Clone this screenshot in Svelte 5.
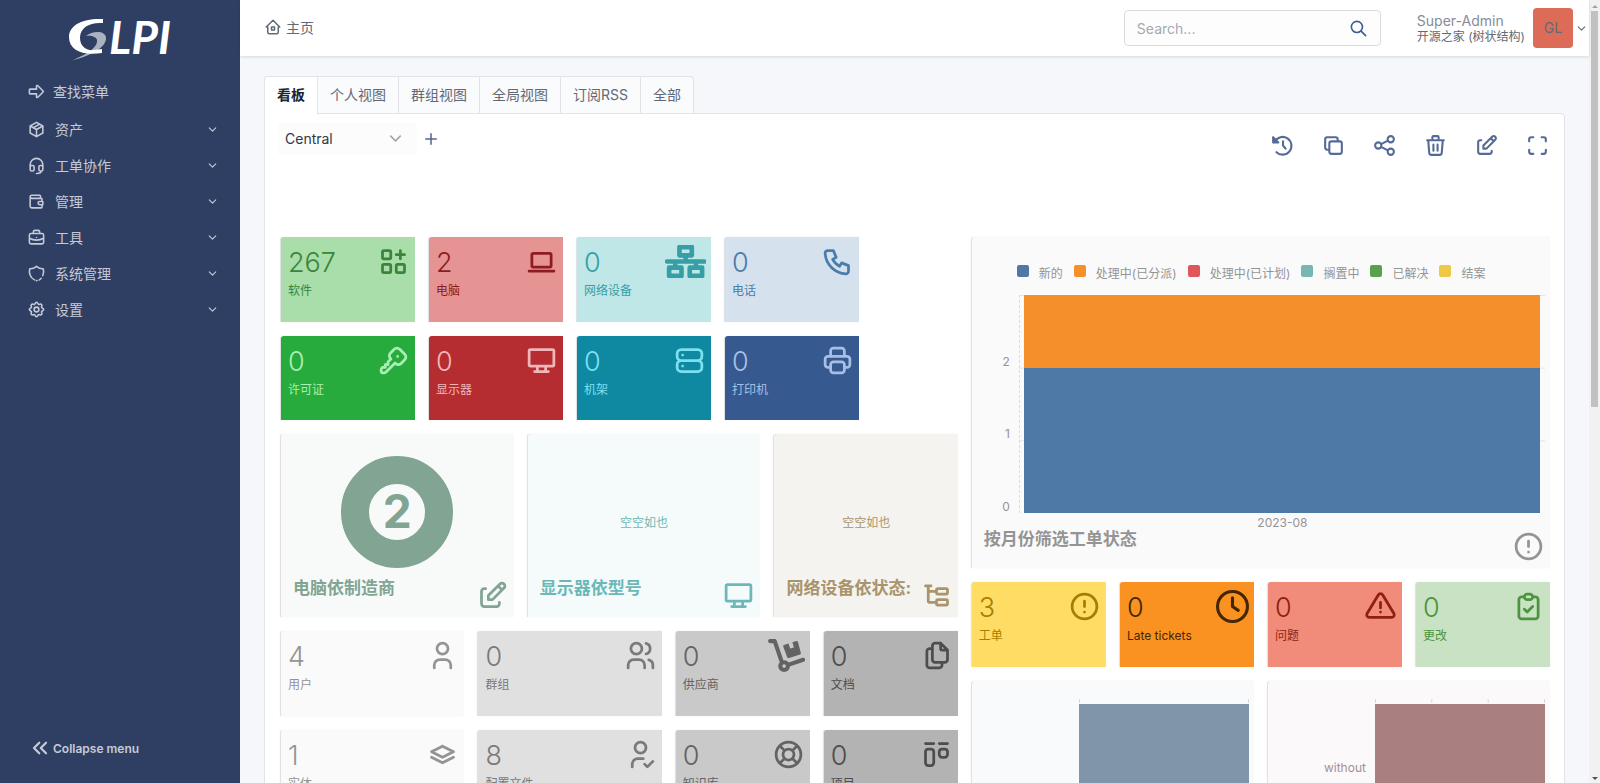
<script>
	const icons = {
		arrow: 'M4 9h8v-3.586a1 1 0 0 1 1.707 -.707l6.586 6.586a1 1 0 0 1 0 1.414l-6.586 6.586a1 1 0 0 1 -1.707 -.707v-3.586h-8a1 1 0 0 1 -1 -1v-4a1 1 0 0 1 1 -1z',
		package: 'M12 3l8 4.5v9l-8 4.5l-8 -4.5v-9l8 -4.5M12 12l8 -4.5M12 12v9M12 12l-8 -4.5M16 5.25l-8 4.5',
		headset: 'M4 14v-3a8 8 0 1 1 16 0v3M18 19c0 1.657 -2.686 3 -6 3M4 14a2 2 0 0 1 2 -2h1a2 2 0 0 1 2 2v3a2 2 0 0 1 -2 2h-1a2 2 0 0 1 -2 -2zM15 14a2 2 0 0 1 2 -2h1a2 2 0 0 1 2 2v3a2 2 0 0 1 -2 2h-1a2 2 0 0 1 -2 -2z',
		wallet: 'M17 8v-3a1 1 0 0 0 -1 -1h-10a2 2 0 0 0 0 4h12a1 1 0 0 1 1 1v3m0 4v3a1 1 0 0 1 -1 1h-12a2 2 0 0 1 -2 -2v-12M20 12v4h-4a2 2 0 0 1 0 -4h4',
		briefcase: 'M3 9a2 2 0 0 1 2 -2h14a2 2 0 0 1 2 2v9a2 2 0 0 1 -2 2h-14a2 2 0 0 1 -2 -2zM8 7v-2a2 2 0 0 1 2 -2h4a2 2 0 0 1 2 2v2M12 12v.01M3 13a20 20 0 0 0 18 0',
		shield: 'M9.5 20.1a12 12 0 0 1 -6 -14.1a12 12 0 0 0 8.5 -3a12 12 0 0 0 8.5 3a12 12 0 0 1 -.6 8.6M18 18l-2.5 2.2M12 21l.6 -.2',
		settings: 'M10.325 4.317c.426 -1.756 2.924 -1.756 3.35 0a1.724 1.724 0 0 0 2.573 1.066c1.543 -.94 3.31 .826 2.37 2.37a1.724 1.724 0 0 0 1.065 2.572c1.756 .426 1.756 2.924 0 3.35a1.724 1.724 0 0 0 -1.066 2.573c.94 1.543 -.826 3.31 -2.37 2.37a1.724 1.724 0 0 0 -2.572 1.065c-.426 1.756 -2.924 1.756 -3.35 0a1.724 1.724 0 0 0 -2.573 -1.066c-1.543 .94 -3.31 -.826 -2.37 -2.37a1.724 1.724 0 0 0 -1.065 -2.572c-1.756 -.426 -1.756 -2.924 0 -3.35a1.724 1.724 0 0 0 1.066 -2.573c-.94 -1.543 .826 -3.31 2.37 -2.37c1 .608 2.296 .07 2.572 -1.065zM9 12a3 3 0 1 0 6 0a3 3 0 0 0 -6 0',
		home: 'M5 12h-2l9 -9l9 9h-2M5 12v7a2 2 0 0 0 2 2h10a2 2 0 0 0 2 -2v-7M10 12h4v4h-4z',
		search: 'M3 10a7 7 0 1 0 14 0a7 7 0 1 0 -14 0M21 21l-6 -6',
		history: 'M4.6 8.2a8.5 8.5 0 1 1 1.6 10.2M12.5 8v4l2.5 3M3 4v5h5zM4 6v2h2z',
		copy: 'M8 10a2 2 0 0 1 2 -2h8a2 2 0 0 1 2 2v8a2 2 0 0 1 -2 2h-8a2 2 0 0 1 -2 -2zM16 8v-2a2 2 0 0 0 -2 -2h-8a2 2 0 0 0 -2 2v8a2 2 0 0 0 2 2h2',
		share: 'M3 12a3 3 0 1 0 6 0a3 3 0 1 0 -6 0M15 6a3 3 0 1 0 6 0a3 3 0 1 0 -6 0M15 18a3 3 0 1 0 6 0a3 3 0 1 0 -6 0M8.7 10.7l6.6 -3.4M8.7 13.3l6.6 3.4',
		trash: 'M4 7h16M10 11v6M14 11v6M5 7l1 12a2 2 0 0 0 2 2h8a2 2 0 0 0 2 -2l1 -12M9 7v-3a1 1 0 0 1 1 -1h4a1 1 0 0 1 1 1v3',
		edit: 'M7 7h-1a2 2 0 0 0 -2 2v9a2 2 0 0 0 2 2h9a2 2 0 0 0 2 -2v-1M20.385 6.585a2.1 2.1 0 0 0 -2.97 -2.97l-8.415 8.385v3h3l8.385 -8.415zM16 5l3 3',
		maximize: 'M4 8v-2a2 2 0 0 1 2 -2h2M4 16v2a2 2 0 0 0 2 2h2M16 4h2a2 2 0 0 1 2 2v2M16 20h2a2 2 0 0 0 2 -2v-2',
		plus: 'M12 5v14M5 12h14',
		chevron: 'M6 9l6 6l6 -6',
		collapse: 'M11 5l-7 7l7 7M20 5l-7 7l7 7',
		apps: 'M4 5a1 1 0 0 1 1 -1h4a1 1 0 0 1 1 1v4a1 1 0 0 1 -1 1h-4a1 1 0 0 1 -1 -1zM4 15a1 1 0 0 1 1 -1h4a1 1 0 0 1 1 1v4a1 1 0 0 1 -1 1h-4a1 1 0 0 1 -1 -1zM14 15a1 1 0 0 1 1 -1h4a1 1 0 0 1 1 1v4a1 1 0 0 1 -1 1h-4a1 1 0 0 1 -1 -1zM14 7h6M17 4v6',
		laptop: 'M3 19h18M5 7a1 1 0 0 1 1 -1h12a1 1 0 0 1 1 1v8a1 1 0 0 1 -1 1h-12a1 1 0 0 1 -1 -1z',
		phone: 'M5 4h4l2 5l-2.5 1.5a11 11 0 0 0 5 5l1.5 -2.5l5 2v4a2 2 0 0 1 -2 2a16 16 0 0 1 -15 -15a2 2 0 0 1 2 -2',
		key: 'M16.555 3.843l3.602 3.602a2.877 2.877 0 0 1 0 4.069l-2.643 2.643a2.877 2.877 0 0 1 -4.069 0l-.301 -.301l-6.558 6.558a2 2 0 0 1 -1.239 .578l-.175 .008h-1.172a1 1 0 0 1 -.993 -.883l-.007 -.117v-1.172a2 2 0 0 1 .467 -1.284l.119 -.13l.414 -.414h2v-2h2v-2l2.144 -2.144l-.301 -.301a2.877 2.877 0 0 1 0 -4.069l2.643 -2.643a2.877 2.877 0 0 1 4.069 0zM15 9h.01',
		desktop: 'M3 5a1 1 0 0 1 1 -1h16a1 1 0 0 1 1 1v10a1 1 0 0 1 -1 1h-16a1 1 0 0 1 -1 -1zM7 20h10M9 16v4M15 16v4',
		server: 'M3 7a3 3 0 0 1 3 -3h12a3 3 0 0 1 3 3v2a3 3 0 0 1 -3 3h-12a3 3 0 0 1 -3 -3zM3 15a3 3 0 0 1 3 -3h12a3 3 0 0 1 3 3v2a3 3 0 0 1 -3 3h-12a3 3 0 0 1 -3 -3zM7 8v.01M7 16v.01',
		printer: 'M17 17h2a2 2 0 0 0 2 -2v-4a2 2 0 0 0 -2 -2h-14a2 2 0 0 0 -2 2v4a2 2 0 0 0 2 2h2M17 9v-4a2 2 0 0 0 -2 -2h-6a2 2 0 0 0 -2 2v4M7 15a2 2 0 0 1 2 -2h6a2 2 0 0 1 2 2v4a2 2 0 0 1 -2 2h-6a2 2 0 0 1 -2 -2z',
		user: 'M8 7a4 4 0 1 0 8 0a4 4 0 0 0 -8 0M6 21v-2a4 4 0 0 1 4 -4h4a4 4 0 0 1 4 4v2',
		users: 'M5 7a4 4 0 1 0 8 0a4 4 0 1 0 -8 0M3 21v-2a4 4 0 0 1 4 -4h4a4 4 0 0 1 4 4v2M16 3.13a4 4 0 0 1 0 7.75M21 21v-2a4 4 0 0 0 -3 -3.85',
		userCheck: 'M8 7a4 4 0 1 0 8 0a4 4 0 0 0 -8 0M6 21v-2a4 4 0 0 1 4 -4h4M15 19l2 2l4 -4',
		stack: 'M12 6l-8 4l8 4l8 -4l-8 -4M4 14l8 4l8 -4',
		files: 'M15 3v4a1 1 0 0 0 1 1h4M18 17h-7a2 2 0 0 1 -2 -2v-10a2 2 0 0 1 2 -2h4l5 5v7a2 2 0 0 1 -2 2zM16 17v2a2 2 0 0 1 -2 2h-7a2 2 0 0 1 -2 -2v-10a2 2 0 0 1 2 -2h2',
		lifebuoy: 'M8 12a4 4 0 1 0 8 0a4 4 0 1 0 -8 0M3 12a9 9 0 1 0 18 0a9 9 0 1 0 -18 0M15 15l3.35 3.35M9 15l-3.35 3.35M5.65 5.65l3.35 3.35M18.35 5.65l-3.35 3.35',
		kanban: 'M4 4h6M14 4h6M4 10a2 2 0 0 1 2 -2h2a2 2 0 0 1 2 2v8a2 2 0 0 1 -2 2h-2a2 2 0 0 1 -2 -2zM14 10a2 2 0 0 1 2 -2h2a2 2 0 0 1 2 2v2a2 2 0 0 1 -2 2h-2a2 2 0 0 1 -2 -2z',
		alert: 'M3 12a9 9 0 1 0 18 0a9 9 0 1 0 -18 0M12 8v4M12 16h.01',
		triangle: 'M12 9v4M10.363 3.591l-8.106 13.534a1.914 1.914 0 0 0 1.636 2.871h16.214a1.914 1.914 0 0 0 1.636 -2.87l-8.106 -13.536a1.914 1.914 0 0 0 -3.274 0zM12 16h.01',
		clipboard: 'M9 5h-2a2 2 0 0 0 -2 2v12a2 2 0 0 0 2 2h10a2 2 0 0 0 2 -2v-12a2 2 0 0 0 -2 -2h-2M9 5a2 2 0 0 1 2 -2h2a2 2 0 0 1 0 4h-2a2 2 0 0 1 -2 -2zM9 14l2 2l4 -4',
		subtask: 'M6 9h6M4 5h4M6 5v11a1 1 0 0 0 1 1h5M12 8a1 1 0 0 1 1 -1h6a1 1 0 0 1 1 1v2a1 1 0 0 1 -1 1h-6a1 1 0 0 1 -1 -1zM12 16a1 1 0 0 1 1 -1h6a1 1 0 0 1 1 1v2a1 1 0 0 1 -1 1h-6a1 1 0 0 1 -1 -1z'
	};

	// icons drawn on a larger, sometimes wider canvas
	const wideIcons = {
		network: {
			w: 640,
			stroke: 72,
			d: 'M224 32h192v128h-192zM320 160v96M32 256h576M160 256v96M480 256v96M64 352h192v128h-192zM384 352h192v128h-192z'
		},
		dolly: {
			w: 576,
			stroke: 64,
			d: 'M32 32h72l108 320M190 420a60 60 0 1 0 120 0a60 60 0 1 0 -120 0M312 402l232 -80',
			fill: 'M236 116q-4 -16 12 -22l70 -24l26 78l58 -18l-24 -78l64 -22q16 -4 22 12l46 176q4 16 -12 22l-172 54q-20 6 -28 -12z'
		},
		clock: {
			w: 512,
			stroke: 48,
			d: 'M24 256a232 232 0 1 0 464 0a232 232 0 1 0 -464 0M256 120v136l88 60'
		}
	};

	const menu = [
		{ label: '资产', icon: 'package' },
		{ label: '工单协作', icon: 'headset' },
		{ label: '管理', icon: 'wallet' },
		{ label: '工具', icon: 'briefcase' },
		{ label: '系统管理', icon: 'shield' },
		{ label: '设置', icon: 'settings' }
	];

	const tabs = ['看板', '个人视图', '群组视图', '全局视图', '订阅RSS', '全部'];
	let activeTab = $state('看板');

	const tools = [
		['history', 'History'],
		['copy', 'Clone'],
		['share', 'Share'],
		['trash', 'Delete'],
		['edit', 'Edit'],
		['maximize', 'Fullscreen']
	];

	// col / row are 1-based cells of the 26 column board
	const tiles = [
		{ n: 267, label: '软件', icon: 'apps', bg: '#a9ddaa', fg: '#38863a', col: 1, row: 1, w: 3 },
		{ n: 2, label: '电脑', icon: 'laptop', bg: '#e69393', fg: '#8c1c21', col: 4, row: 1, w: 3 },
		{ n: 0, label: '网络设备', icon: 'network', bg: '#bfe7e8', fg: '#369fa6', col: 7, row: 1, w: 3 },
		{ n: 0, label: '电话', icon: 'phone', bg: '#d5e1ec', fg: '#4a7dab', col: 10, row: 1, w: 3 },
		{ n: 0, label: '许可证', icon: 'key', bg: '#28ab3d', fg: '#a9efb3', col: 1, row: 3, w: 3 },
		{ n: 0, label: '显示器', icon: 'desktop', bg: '#b52d30', fg: '#f2b6b8', col: 4, row: 3, w: 3 },
		{ n: 0, label: '机架', icon: 'server', bg: '#0e89a1', fg: '#7de0f0', col: 7, row: 3, w: 3 },
		{ n: 0, label: '打印机', icon: 'printer', bg: '#36598f', fg: '#a8bfe5', col: 10, row: 3, w: 3 },
		{ n: 4, label: '用户', icon: 'user', bg: '#fafafa', fg: '#949494', col: 1, row: 9, w: 4 },
		{ n: 0, label: '群组', icon: 'users', bg: '#e0e0e0', fg: '#7a7a7a', col: 5, row: 9, w: 4 },
		{ n: 0, label: '供应商', icon: 'dolly', bg: '#c9c9c9', fg: '#636363', col: 9, row: 9, w: 3 },
		{ n: 0, label: '文档', icon: 'files', bg: '#b3b3b3', fg: '#4d4d4d', col: 12, row: 9, w: 3 },
		{ n: 1, label: '实体', icon: 'stack', bg: '#fafafa', fg: '#949494', col: 1, row: 11, w: 4 },
		{ n: 8, label: '配置文件', icon: 'userCheck', bg: '#e0e0e0', fg: '#7a7a7a', col: 5, row: 11, w: 4 },
		{ n: 0, label: '知识库', icon: 'lifebuoy', bg: '#c9c9c9', fg: '#636363', col: 9, row: 11, w: 3 },
		{ n: 0, label: '项目', icon: 'kanban', bg: '#b3b3b3', fg: '#4d4d4d', col: 12, row: 11, w: 3 },
		{ n: 3, label: '工单', icon: 'alert', bg: '#ffdc64', fg: '#a67f00', col: 15, row: 8, w: 3 },
		{ n: 0, label: 'Late tickets', icon: 'clock', bg: '#f99220', fg: '#452600', col: 18, row: 8, w: 3 },
		{ n: 0, label: '问题', icon: 'triangle', bg: '#f18c7b', fg: '#8f1f10', col: 21, row: 8, w: 3 },
		{ n: 0, label: '更改', icon: 'clipboard', bg: '#c9e2c3', fg: '#4c9440', col: 24, row: 8, w: 3 }
	];

	const summaries = [
		{ title: '电脑依制造商', icon: 'edit', bg: '#f8faf9', fg: '#82a593', col: 1, w: 5, total: 2 },
		{ title: '显示器依型号', icon: 'desktop', bg: '#f5fbfb', fg: '#6cb8b8', col: 6, w: 5 },
		{ title: '网络设备依状态:', icon: 'subtask', bg: '#f4f3ef', fg: '#a9946c', col: 11, w: 4 }
	];

	const legend = [
		['新的', '#4e79a7'],
		['处理中(已分派)', '#f48f2c'],
		['处理中(已计划)', '#e15759'],
		['搁置中', '#76b7b2'],
		['已解决', '#59a14f'],
		['结案', '#edc948']
	];

	const bars = [
		{ label: '', bg: '#f9fafc', fg: '#8094aa', col: 15, steps: 1 },
		{ label: 'without', bg: '#fbf9fa', fg: '#a97f7f', col: 21, steps: 3 }
	];
</script>

{#snippet icon(name, size)}
	{#if wideIcons[name]}
		<svg
			height={size}
			viewBox="0 0 {wideIcons[name].w} 512"
			fill="none"
			stroke="currentColor"
			stroke-width={wideIcons[name].stroke}
			stroke-linecap="round"
			stroke-linejoin="round"
			aria-hidden="true"
		>
			<path d={wideIcons[name].d} />
			{#if wideIcons[name].fill}
				<path d={wideIcons[name].fill} fill="currentColor" stroke="none" />
			{/if}
		</svg>
	{:else}
		<svg
			width={size}
			height={size}
			viewBox="0 0 24 24"
			fill="none"
			stroke="currentColor"
			stroke-width="2"
			stroke-linecap="round"
			stroke-linejoin="round"
			aria-hidden="true"
		>
			<path d={icons[name]} />
		</svg>
	{/if}
{/snippet}

<div class="page">
	<aside class="sidebar">
		<a class="logo" href="#home" aria-label="GLPI">
			<svg class="mark" width="38" height="43" viewBox="0 0 38 43" aria-hidden="true">
				<path
					d="M17 18C23 13 36.500 12 37 20C37.500 29 22 38 3 42.500C16 37 29 30 28 22C27.500 19 22 17 17 18z"
					fill="#aab2c1"
				/>
				<path
					d="M34 1v4C21 4 11 9 11 20c0 8 6 13 14 12l8 -1v4C13 38 0 32 0 19C0 7 14 0 34 1z"
					fill="#fff"
				/>
			</svg>
			<span class="word">LPI</span>
		</a>
		<button class="find">
			{@render icon('arrow', 19)}
			查找菜单
		</button>
		<nav>
			{#each menu as item}
				<button class="item">
					{@render icon(item.icon, 19)}
					<span>{item.label}</span>
					{@render icon('chevron', 13)}
				</button>
			{/each}
		</nav>
		<button class="collapse">
			{@render icon('collapse', 18)}
			Collapse menu
		</button>
	</aside>

	<div class="main">
		<header>
			<a class="crumb" href="#home">
				{@render icon('home', 18)}
				<span>主页</span>
			</a>
			<form class="search">
				<input type="text" placeholder="Search..." aria-label="Search" />
				<button type="button" aria-label="Search">{@render icon('search', 19)}</button>
			</form>
			<button class="account">
				<span class="who">
					<span class="profile">Super-Admin</span>
					<span class="entity">开源之家 (树状结构)</span>
				</span>
				<span class="avatar">GL</span>
				{@render icon('chevron', 13)}
			</button>
		</header>

		<div class="content">
			<div class="tabs" role="tablist">
				{#each tabs as tab}
					<button
						role="tab"
						aria-selected={tab === activeTab}
						class:active={tab === activeTab}
						onclick={() => (activeTab = tab)}>{tab}</button
					>
				{/each}
			</div>

			<section class="card">
				<div class="toolbar">
					<div class="select">
						<select aria-label="Dashboard">
							<option>Central</option>
						</select>
						{@render icon('chevron', 19)}
					</div>
					<button class="add" aria-label="Add dashboard">{@render icon('plus', 18)}</button>
					<div class="tools">
						{#each tools as [name, label]}
							<button aria-label={label}>{@render icon(name, 25)}</button>
						{/each}
					</div>
				</div>

				<div class="board">
					{#each tiles as t}
						<a
							class="widget tile"
							href="#list"
							style="grid-area: {t.row} / {t.col} / span 2 / span {t.w}; background: {t.bg}; color: {t.fg}"
						>
							<span class="figures">
								<span class="number">{t.n}</span>
								<span class="label">{t.label}</span>
							</span>
							{@render icon(t.icon, 33)}
						</a>
					{/each}

					{#each summaries as s}
						<div
							class="widget summary"
							style="grid-area: 5 / {s.col} / span 4 / span {s.w}; background: {s.bg}; color: {s.fg}"
						>
							{#if s.total}
								<div class="donut"><span>{s.total}</span></div>
							{:else}
								<div class="empty">空空如也</div>
							{/if}
							<div class="foot">
								<h2>{s.title}</h2>
								{@render icon(s.icon, 33)}
							</div>
						</div>
					{/each}

					<div class="widget chart">
						<ul class="legend">
							{#each legend as [name, color]}
								<li><i style="background: {color}"></i>{name}</li>
							{/each}
						</ul>
						<div class="graph">
							<div class="scale"><span>2</span><span>1</span><span>0</span></div>
							<div class="plot">
								<div class="assigned"></div>
								<div class="new"></div>
							</div>
						</div>
						<div class="month">2023-08</div>
						<div class="foot">
							<h2>按月份筛选工单状态</h2>
							{@render icon('alert', 33)}
						</div>
					</div>

					{#each bars as b}
						<div class="widget hbar" style="grid-area: 10 / {b.col} / span 7 / span 6; background: {b.bg}">
							<span class="name">{b.label}</span>
							<div class="track" style="background-size: calc((100% - 1px) / {b.steps}) 4px">
								<div class="fill" style="background: {b.fg}"></div>
							</div>
						</div>
					{/each}
				</div>
			</section>
		</div>
	</div>

	<div class="scrollbar" aria-hidden="true">
		<i class="up"></i>
		<div class="rail"><div class="thumb"></div></div>
		<i class="down"></i>
	</div>
</div>

<style>
	:global(body) {
		font-family: Inter, 'Noto Sans CJK SC', sans-serif;
		font-size: 14px;
		color: #626976;
	}

	.page {
		display: flex;
		height: 100vh;
		overflow: hidden;
		background: #f5f7fb;
	}

	.page :global(svg) {
		display: block;
		flex: none;
	}

	button,
	input,
	select {
		font: inherit;
		color: inherit;
		background: none;
		border: 0;
		padding: 0;
		margin: 0;
	}

	button {
		cursor: pointer;
	}

	a {
		color: inherit;
		text-decoration: none;
	}

	/* sidebar */
	.sidebar {
		flex: none;
		width: 240px;
		box-sizing: border-box;
		display: flex;
		flex-direction: column;
		padding: 14px 0 20px;
		background: #2f3f64;
		color: #c5cad6;
	}

	.logo {
		display: flex;
		justify-content: center;
		gap: 2px;
		height: 57px;
		color: #fff;
	}

	.mark {
		margin-top: 4px;
	}

	.word {
		font: italic 700 46px/46px Lato, sans-serif;
	}

	.find,
	.item,
	.collapse {
		display: flex;
		align-items: center;
		text-align: left;
	}

	.find {
		height: 40px;
		padding: 0 24px 0 27px;
		gap: 7px;
	}

	nav {
		display: flex;
		flex-direction: column;
	}

	.item {
		height: 36px;
		padding: 0 21px 0 27px;
		gap: 9px;
	}

	.item span {
		flex: 1;
	}

	.collapse {
		margin-top: auto;
		height: 30px;
		padding: 0 31px;
		gap: 4px;
		font-size: 12px;
		font-weight: 600;
	}

	.collapse :global(svg) {
		stroke-width: 3;
	}

	/* header */
	.main {
		flex: 1;
		min-width: 0;
		display: flex;
		flex-direction: column;
	}

	header {
		flex: none;
		display: flex;
		align-items: center;
		height: 56px;
		padding: 0 1px 0 24px;
		background: #fff;
		box-shadow: 0 1px 3px rgba(35, 46, 60, 0.15);
		z-index: 1;
	}

	.crumb {
		display: flex;
		align-items: center;
		gap: 4px;
		margin-right: auto;
		padding-bottom: 2px;
	}

	.search {
		display: flex;
		align-items: center;
		width: 257px;
		height: 36px;
		box-sizing: border-box;
		padding: 0 12px;
		border: 1px solid #d9dbde;
		border-radius: 4px;
		background: #fdfdfd;
	}

	.search input {
		flex: 1;
		min-width: 0;
		outline: none;
	}

	.search input::placeholder {
		color: #a5a9b1;
	}

	.search button {
		color: #3f5a94;
	}

	.account {
		display: flex;
		align-items: center;
		gap: 8px;
		margin-left: 36px;
		text-align: left;
	}

	.account :global(svg) {
		margin-left: -6px;
	}

	.who {
		display: flex;
		flex-direction: column;
		line-height: 16px;
		padding-top: 1px;
	}

	.profile {
		color: #868c97;
	}

	.entity {
		font-size: 12px;
	}

	.avatar {
		width: 40px;
		line-height: 40px;
		border-radius: 4px;
		background: #dc6b57;
		text-align: center;
	}

	/* content */
	.content {
		flex: 1;
		min-height: 0;
		overflow-y: auto;
		scrollbar-width: none;
		padding: 20px 24px 0;
	}

	.tabs {
		display: flex;
	}

	.tabs button {
		height: 37px;
		padding: 0 12px 2px;
		border: 1px solid #e1e3e7;
		border-width: 1px 1px 0 0;
		background: #fafbfd;
	}

	.tabs button:first-child {
		border-left-width: 1px;
		border-top-left-radius: 4px;
	}

	.tabs button:last-child {
		border-top-right-radius: 4px;
	}

	.tabs button.active {
		height: 38px;
		padding-bottom: 3px;
		margin-bottom: -1px;
		background: #fff;
		color: #1b2434;
		font-weight: 600;
		z-index: 1;
	}

	.card {
		border: 1px solid #e1e3e7;
		border-radius: 0 4px 4px 4px;
		background: #fff;
		padding: 9px 14px 16px 13px;
	}

	.toolbar {
		display: flex;
		align-items: flex-start;
		height: 114px;
	}

	.select {
		position: relative;
		width: 139px;
		border-radius: 2px;
		background: #fcfcfc;
		color: #a2a5ab;
	}

	.select select {
		appearance: none;
		width: 100%;
		height: 32px;
		padding: 0 7px 1px;
		color: #2f3747;
	}

	.select :global(svg) {
		position: absolute;
		right: 12px;
		top: 6px;
		pointer-events: none;
	}

	.add {
		margin: 7px 0 0 5px;
		color: #526592;
	}

	.tools {
		display: flex;
		gap: 26px;
		margin: 10px 0 0 auto;
		color: #566a96;
	}

	.board {
		display: grid;
		grid-template-columns: repeat(26, minmax(0, 1fr));
		grid-template-rows: repeat(4, 36px 35px 35px 35px);
		gap: 14px;
		padding-left: 3px;
	}

	.widget {
		border-top-left-radius: 3px;
		box-shadow: -1px 0 1px rgba(35, 46, 60, 0.16);
		overflow: hidden;
	}

	.tile {
		display: flex;
		justify-content: space-between;
		padding: 8px 5px 0 7px;
	}

	.figures {
		display: flex;
		flex-direction: column;
		padding-top: 4px;
		white-space: nowrap;
	}

	.number {
		font-size: 27px;
		font-weight: 300;
		line-height: 28px;
	}

	.label {
		margin-top: 6px;
		font-size: 12px;
		line-height: 16px;
	}

	.summary,
	.chart {
		display: flex;
		flex-direction: column;
	}

	.foot {
		display: flex;
		justify-content: space-between;
		margin-top: auto;
		padding: 0 5px 5px 12px;
	}

	h2 {
		margin: 0;
		font-size: 17px;
		font-weight: 700;
		line-height: 18px;
		white-space: nowrap;
	}

	.donut {
		box-sizing: border-box;
		width: 112px;
		height: 112px;
		margin: 22px auto 0;
		border: 28px solid currentColor;
		border-radius: 50%;
		font-size: 46px;
		font-weight: 700;
		line-height: 54px;
		text-align: center;
	}

	.empty {
		margin: auto;
		padding-top: 30px;
		font-size: 12px;
	}

	.empty + .foot {
		margin-top: 0;
	}

	/* stacked status chart */
	.chart {
		grid-area: 1 / 15 / span 7 / span 12;
		background: #fafafa;
		color: #949494;
		font-size: 12px;
	}

	.legend {
		display: flex;
		gap: 11px;
		margin: 0;
		padding: 28px 0 0 45px;
		height: 30px;
		list-style: none;
		line-height: 18px;
		white-space: nowrap;
	}

	.legend li {
		display: flex;
		gap: 10px;
	}

	.legend i {
		width: 12px;
		height: 12px;
		border-radius: 2px;
	}

	.graph {
		display: flex;
		flex: 1;
	}

	.scale {
		width: 38px;
		display: flex;
		flex-direction: column;
		text-align: right;
		line-height: 12px;
	}

	.scale span {
		flex: 1;
		display: flex;
		align-items: flex-end;
		justify-content: flex-end;
	}

	.plot {
		flex: 1;
		display: flex;
		flex-direction: column;
		margin: 0 5px 0 9px;
		padding: 0 5px 0 4px;
		border-left: 1px dashed #dcdcdc;
		background: linear-gradient(#e4e4e4 1px, transparent 1px) 0 0 / 100% calc(100% / 3);
	}

	.assigned {
		flex: 1;
		background: #f48f2c;
	}

	.new {
		flex: 2;
		background: #4e79a7;
	}

	.month {
		padding: 2px 0 0 43px;
		line-height: 15px;
		text-align: center;
	}

	/* horizontal bars */
	.hbar {
		display: flex;
		padding: 18px 5px 0 0;
	}

	.name {
		width: 98px;
		padding: 61px 0 0;
		box-sizing: border-box;
		flex: none;
		font-size: 12px;
		text-align: right;
		color: #a68f93;
	}

	.track {
		flex: 1;
		height: 140px;
		margin-left: 9px;
		padding-top: 5px;
		background: linear-gradient(to right, #d8d8dc 1px, transparent 1px) repeat-x;
	}

	.fill {
		height: 128px;
	}

	/* page scrollbar */
	.scrollbar {
		flex: none;
		width: 11px;
		display: flex;
		flex-direction: column;
		align-items: center;
		background: #f1f1f1;
	}

	.scrollbar i {
		border: 3px solid transparent;
	}

	.scrollbar .up {
		margin: 2px 0 3px;
		border-bottom-color: #a3a3a3;
	}

	.scrollbar .down {
		margin: 5px 0 0;
		border-top-color: #505050;
	}

	.rail {
		flex: 1;
	}

	.thumb {
		width: 7px;
		height: 52%;
		background: #c1c1c1;
	}
</style>
